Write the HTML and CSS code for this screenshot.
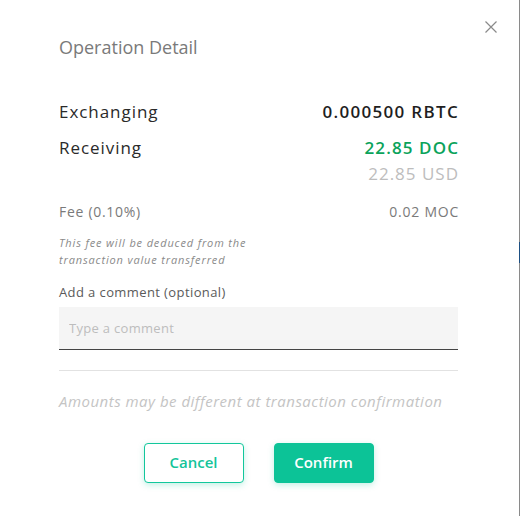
FILE: index.html
```html
<!DOCTYPE html>
<html lang="en">
<head>
<meta charset="utf-8">
<title>Operation Detail</title>
<link rel="stylesheet" href="styles.css">
</head>
<body>
<div class="dialog">
  <button class="close" aria-label="Close">
    <svg width="12" height="12" viewBox="0 0 12 12"><path d="M0.5 0.5L11.5 11.5M11.5 0.5L0.5 11.5" stroke="#8a8a8a" stroke-width="1.2" fill="none"/></svg>
  </button>
  <h2 class="title">Operation Detail</h2>

  <div class="row row-main first">
    <span class="label">Exchanging</span>
    <span class="value strong">0.000500 RBTC</span>
  </div>
  <div class="row row-main second">
    <span class="label">Receiving</span>
    <div class="values">
      <span class="value strong green">22.85 DOC</span>
      <span class="value usd">22.85 USD</span>
    </div>
  </div>

  <div class="row row-fee">
    <span class="fee-label">Fee (0.10%)</span>
    <span class="fee-value">0.02 MOC</span>
  </div>
  <p class="note">This fee will be deduced from the<br>transaction value transferred</p>

  <label class="comment-label" for="comment">Add a comment (optional)</label>
  <input class="comment-input" id="comment" type="text" placeholder="Type a comment">

  <hr class="divider">
  <p class="disclaimer">Amounts may be different at transaction confirmation</p>

  <div class="actions">
    <button class="btn btn-outline">Cancel</button>
    <button class="btn btn-solid">Confirm</button>
  </div>
</div>
<div class="edge"><div class="edge-mark"></div></div>
</body>
</html>
```

FILE: styles.css
```css
* { box-sizing: border-box; }
html, body {
  margin: 0;
  padding: 0;
  background: #fff;
  font-family: "Open Sans", "Noto Sans", sans-serif;
}
.dialog {
  position: relative;
  width: 519px;
  height: 516px;
  padding: 36px 61px 0 59px;
}
.close {
  position: absolute;
  top: 21px;
  left: 485px;
  width: 12px;
  height: 12px;
  padding: 0;
  border: 0;
  background: none;
  line-height: 0;
}
.title {
  margin: 0;
  font-size: 18px;
  line-height: 22px;
  font-weight: 400;
  color: #7a7a7a;
}
.row {
  display: flex;
  justify-content: space-between;
  align-items: flex-start;
}
.row-main {
  font-size: 17px;
  line-height: 22px;
  color: #2a2a2a;
}
.label { letter-spacing: 0.95px; }
.first { margin-top: 43px; }
.second { margin-top: 14px; }
.values {
  display: flex;
  flex-direction: column;
  align-items: flex-end;
}
.value { margin-right: -1px; }
.value.strong { font-weight: 600; color: #1f1f1f; letter-spacing: 1.3px; }
.value.green { color: #0ba35b; letter-spacing: 1.1px; }
.value.usd { color: #bdbdbd; margin-top: 4px; letter-spacing: 1px; }
.row-fee {
  margin-top: 17px;
  font-size: 14px;
  line-height: 20px;
  color: #7a7a7a;
}
.fee-label { letter-spacing: 0.7px; }
.fee-value { letter-spacing: 0.75px; margin-right: -1px; }
.note {
  margin: 12px 0 0;
  font-size: 11px;
  line-height: 17px;
  font-style: italic;
  color: #8a8a8a;
  letter-spacing: 0.85px;
}
.comment-label {
  display: block;
  margin-top: 15px;
  font-size: 13px;
  line-height: 18px;
  color: #5a5a5a;
  letter-spacing: 0.4px;
}
.comment-input {
  display: block;
  width: 100%;
  height: 43px;
  margin-top: 6px;
  padding: 0 10px;
  border: 0;
  border-bottom: 1px solid #444;
  background: #f5f5f5;
  font-family: inherit;
  font-size: 13px;
  letter-spacing: 0.3px;
  color: #333;
  outline: none;
}
.comment-input::placeholder { color: #bdbdbd; }
.divider {
  margin: 20px 0 0;
  border: 0;
  border-top: 1px solid #e2e2e2;
}
.disclaimer {
  margin: 20px 0 0;
  font-size: 15px;
  line-height: 20px;
  font-style: italic;
  color: #c4c4c4;
  letter-spacing: 0.5px;
}
.actions {
  display: flex;
  justify-content: center;
  gap: 30px;
  margin-top: 32px;
}
.btn {
  width: 100px;
  height: 40px;
  border-radius: 4px;
  font-family: inherit;
  font-size: 15px;
  font-weight: 600;
  line-height: 18px;
  padding: 0 0 2px;
  box-shadow: 0 2px 6px rgba(13, 196, 150, 0.25);
}
.btn-outline {
  background: #fff;
  border: 1px solid #12c79c;
  color: #14c49a;
}
.btn-solid {
  background: #0cc397;
  border: 1px solid #0cc397;
  color: #fff;
}
.edge {
  position: absolute;
  top: 0;
  left: 519px;
  width: 1px;
  height: 516px;
  background: #8a8a8a;
}
.edge-mark {
  position: absolute;
  top: 242px;
  left: 0;
  width: 1px;
  height: 21px;
  background: #1d4f82;
}
```
